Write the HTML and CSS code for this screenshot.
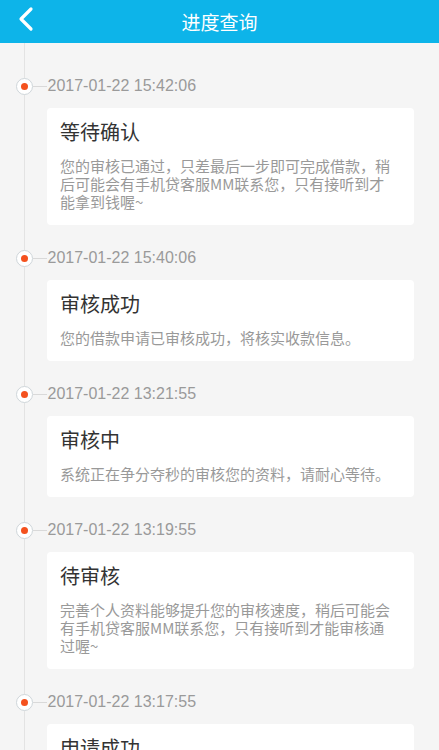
FILE: index.html
```html
<!DOCTYPE html>
<html lang="zh-CN">
<head>
  <meta charset="UTF-8" />
  <meta name="viewport" content="width=device-width, initial-scale=1.0" />
  <title>进度查询</title>
  <link rel="stylesheet" href="styles.css">
</head>
<body>
  <header class="topbar">
    <a class="back" href="#">
      <svg width="16" height="26" viewBox="0 0 16 26">
        <polyline points="13,3 3,13 13,23" fill="none" stroke="#fff" stroke-width="3.2" stroke-linecap="round" stroke-linejoin="round" />
      </svg>
    </a>
    <h1>进度查询</h1>
  </header>

  <div class="timeline">
    <div class="item">
      <div class="time"><span class="dot"></span><span class="link"></span>2017-01-22 15:42:06</div>
      <div class="card">
        <h2>等待确认</h2>
        <p>您的审核已通过，只差最后一步即可完成借款，稍后可能会有手机贷客服MM联系您，只有接听到才能拿到钱喔~</p>
      </div>
    </div>

    <div class="item">
      <div class="time"><span class="dot"></span><span class="link"></span>2017-01-22 15:40:06</div>
      <div class="card">
        <h2>审核成功</h2>
        <p>您的借款申请已审核成功，将核实收款信息。</p>
      </div>
    </div>

    <div class="item">
      <div class="time"><span class="dot"></span><span class="link"></span>2017-01-22 13:21:55</div>
      <div class="card">
        <h2>审核中</h2>
        <p>系统正在争分夺秒的审核您的资料，请耐心等待。</p>
      </div>
    </div>

    <div class="item">
      <div class="time"><span class="dot"></span><span class="link"></span>2017-01-22 13:19:55</div>
      <div class="card">
        <h2>待审核</h2>
        <p>完善个人资料能够提升您的审核速度，稍后可能会有手机贷客服MM联系您，只有接听到才能审核通过喔~</p>
      </div>
    </div>

    <div class="item">
      <div class="time"><span class="dot"></span><span class="link"></span>2017-01-22 13:17:55</div>
      <div class="card">
        <h2>申请成功</h2>
        <p>您的借款申请已提交成功，请耐心等待审核。</p>
      </div>
    </div>
  </div>
</body>
</html>
```

FILE: styles.css
```css
body {
  font-family: "Noto Sans CJK SC", "Noto Sans", sans-serif;
  background-color: #f5f5f5;
  color: #333;
  margin: 0;
  padding: 0;
}

.topbar {
  height: 43px;
  background-color: #0db4e9;
  display: flex;
  align-items: center;
  justify-content: center;
  position: relative;
}

.topbar h1 {
  margin: 0;
  font-size: 19px;
  font-weight: normal;
  color: #fff;
}

.back {
  position: absolute;
  left: 18px;
  top: 6px;
  display: block;
  width: 16px;
  height: 26px;
}

.timeline {
  position: relative;
  padding: 33px 25px 0 16px;
}

.timeline::before {
  content: "";
  position: absolute;
  left: 24px;
  top: 0;
  bottom: 0;
  width: 1px;
  background: #e3e3e3;
}

.item {
  margin-bottom: 23px;
}

.time {
  position: relative;
  display: flex;
  align-items: center;
  height: 20px;
  font-family: "Liberation Sans", "Noto Sans", sans-serif;
  font-size: 16px;
  color: #9a9a9a;
}

.dot {
  width: 15px;
  height: 15px;
  border: 1px solid #cfd6da;
  border-radius: 50%;
  background: #fff;
  display: flex;
  align-items: center;
  justify-content: center;
  flex-shrink: 0;
  margin-left: -0.5px;
}

.dot::after {
  content: "";
  width: 7px;
  height: 7px;
  border-radius: 50%;
  background: #f4511e;
}

.link {
  width: 14px;
  height: 1px;
  background: #d9d9d9;
  margin-right: 1px;
}

.card {
  margin: 12px 0 0 31px;
  background: #fff;
  border-radius: 4px;
  padding: 12px 18px 14px 13px;
}

.card h2 {
  margin: 0;
  font-size: 20px;
  line-height: 24px;
  font-weight: normal;
  color: #333;
}

.card p {
  margin: 13px 0 0;
  font-size: 15px;
  line-height: 18px;
  color: #999;
}
```
